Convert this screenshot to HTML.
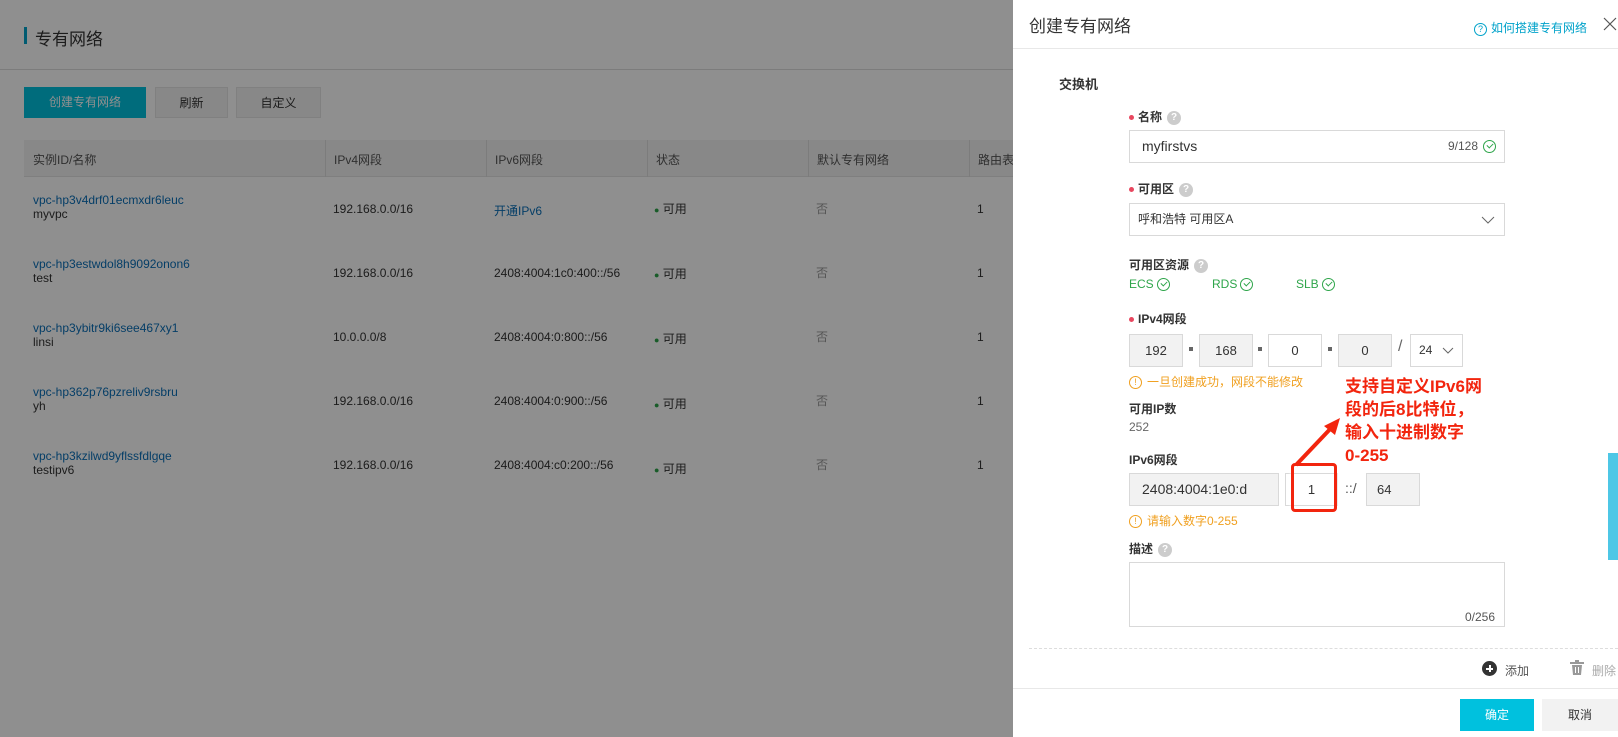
<!DOCTYPE html><html><head><meta charset="utf-8"><style>
*{margin:0;padding:0;box-sizing:border-box}
body{width:1618px;height:737px;overflow:hidden;position:relative;font-family:"Liberation Sans","Noto Sans CJK SC",sans-serif;font-size:12px;color:#333;background:#fff}
.a{position:absolute}
.ov{position:absolute;left:0;top:0;width:1013px;height:737px;background:rgba(0,0,0,0.44)}
.th{color:#555}
.lk{color:#0a6fb8}
.lbl{font-weight:bold;font-size:12px;color:#333}
.dot{display:inline-block;width:5px;height:5px;border-radius:50%;background:#e8475f;margin-right:4px;vertical-align:middle}
.q{display:inline-block;width:14px;height:14px;border-radius:50%;background:#ccc;color:#fff;font-size:10px;text-align:center;line-height:14px;margin-left:5px;vertical-align:middle}
.box{position:absolute;border:1px solid #d9d9d9;height:33px;line-height:31px;font-size:13px;text-align:center}
.g{background:#f2f2f2}
.ck{display:inline-block;width:13px;height:13px;border:1px solid #2ea54a;border-radius:50%;vertical-align:middle;margin-left:3px;position:relative}
.ck:after{content:"";position:absolute;left:3px;top:2px;width:5px;height:3px;border-left:1px solid #2ea54a;border-bottom:1px solid #2ea54a;transform:rotate(-45deg)}
.ann{color:#f2250e;font-weight:bold;font-size:17px;line-height:23px;text-shadow:-1px -1px 0 #fff,1px -1px 0 #fff,-1px 1px 0 #fff,1px 1px 0 #fff,0 0 3px #fff}
.warn{color:#f0a020;font-size:12px}
.wi{display:inline-block;width:13px;height:13px;border:1px solid #f0a020;border-radius:50%;font-size:9px;text-align:center;line-height:11px;margin-right:5px;vertical-align:middle}
</style></head><body>
<div class="a" style="left:0;top:0;width:1013px;height:70px;background:#fff;border-bottom:1px solid #ddd"></div>
<div class="a" style="left:24px;top:27px;width:3px;height:17px;background:#00a2ca"></div>
<div class="a" style="left:35px;top:25px;font-size:17px;color:#333">专有网络</div>
<div class="a" style="left:0;top:71px;width:1013px;height:666px;background:#fff"></div>
<div class="a" style="left:24px;top:87px;width:122px;height:31px;background:#00c1de;color:#fff;text-align:center;line-height:31px">创建专有网络</div>
<div class="a" style="left:155px;top:87px;width:73px;height:31px;background:#f2f2f2;text-align:center;line-height:31px;border:1px solid #e5e5e5">刷新</div>
<div class="a" style="left:236px;top:87px;width:85px;height:31px;background:#f2f2f2;text-align:center;line-height:31px;border:1px solid #e5e5e5">自定义</div>
<div class="a" style="left:24px;top:140px;width:989px;height:37px;background:#f2f2f2;border-bottom:1px solid #e3e3e3"></div>
<div class="a th" style="left:33px;top:151px">实例ID/名称</div>
<div class="a th" style="left:325px;top:140px;border-left:1px solid #ddd;height:37px;padding:11px 0 0 8px">IPv4网段</div>
<div class="a th" style="left:486px;top:140px;border-left:1px solid #ddd;height:37px;padding:11px 0 0 8px">IPv6网段</div>
<div class="a th" style="left:647px;top:140px;border-left:1px solid #ddd;height:37px;padding:11px 0 0 8px">状态</div>
<div class="a th" style="left:808px;top:140px;border-left:1px solid #ddd;height:37px;padding:11px 0 0 8px">默认专有网络</div>
<div class="a th" style="left:969px;top:140px;border-left:1px solid #ddd;height:37px;padding:11px 0 0 8px">路由表</div>
<div class="a" style="left:24px;top:177px;width:989px;height:320px;font-size:12px">
 <div class="a" style="left:9px;top:16px"><div class="lk">vpc-hp3v4drf01ecmxdr6leuc</div><div>myvpc</div></div>
 <div class="a" style="left:309px;top:25px">192.168.0.0/16</div><div class="a lk" style="left:470px;top:25px">开通IPv6</div>
 <div class="a" style="left:9px;top:80px"><div class="lk">vpc-hp3estwdol8h9092onon6</div><div>test</div></div>
 <div class="a" style="left:309px;top:89px">192.168.0.0/16</div><div class="a" style="left:470px;top:89px">2408:4004:1c0:400::/56</div>
 <div class="a" style="left:9px;top:144px"><div class="lk">vpc-hp3ybitr9ki6see467xy1</div><div>linsi</div></div>
 <div class="a" style="left:309px;top:153px">10.0.0.0/8</div><div class="a" style="left:470px;top:153px">2408:4004:0:800::/56</div>
 <div class="a" style="left:9px;top:208px"><div class="lk">vpc-hp362p76pzreliv9rsbru</div><div>yh</div></div>
 <div class="a" style="left:309px;top:217px">192.168.0.0/16</div><div class="a" style="left:470px;top:217px">2408:4004:0:900::/56</div>
 <div class="a" style="left:9px;top:272px"><div class="lk">vpc-hp3kzilwd9yflssfdlgqe</div><div>testipv6</div></div>
 <div class="a" style="left:309px;top:281px">192.168.0.0/16</div><div class="a" style="left:470px;top:281px">2408:4004:c0:200::/56</div>
</div>
<div class="a" style="left:654px;top:177px;line-height:64px"><div><span style="color:#2ea54a;font-size:9px">●</span> 可用</div><div><span style="color:#2ea54a;font-size:9px">●</span> 可用</div><div><span style="color:#2ea54a;font-size:9px">●</span> 可用</div><div><span style="color:#2ea54a;font-size:9px">●</span> 可用</div><div><span style="color:#2ea54a;font-size:9px">●</span> 可用</div></div>
<div class="a" style="left:816px;top:177px;line-height:64px;color:#999"><div>否</div><div>否</div><div>否</div><div>否</div><div>否</div></div>
<div class="a" style="left:977px;top:177px;line-height:64px"><div>1</div><div>1</div><div>1</div><div>1</div><div>1</div></div>
<div class="ov"></div>
<div class="a" style="left:1013px;top:0;width:605px;height:737px;background:#fff"></div>
<div class="a" style="left:1029px;top:12px;font-size:17px;color:#333">创建专有网络</div>
<div class="a" style="left:1474px;top:19px;color:#00a2ca;font-size:12px"><span style="display:inline-block;width:13px;height:13px;border:1px solid #00a2ca;border-radius:50%;font-size:9px;text-align:center;line-height:11px;margin-right:4px">?</span>如何搭建专有网络</div>
<svg class="a" style="left:1603px;top:17px" width="14" height="14"><path d="M1 1L13 13M13 1L1 13" stroke="#555" stroke-width="1.2"/></svg>
<div class="a" style="left:1013px;top:48px;width:605px;height:1px;background:#e8e8e8"></div>
<div class="a lbl" style="left:1059px;top:74px;font-size:13px">交换机</div>
<div class="a lbl" style="left:1129px;top:108px"><span class="dot"></span>名称<span class="q">?</span></div>
<div class="box" style="left:1129px;top:130px;width:376px;text-align:left;padding-left:12px;font-size:14px">myfirstvs<span style="position:absolute;right:8px;font-size:12px;color:#555">9/128<span class="ck" style="margin-left:5px"></span></span></div>
<div class="a lbl" style="left:1129px;top:180px"><span class="dot"></span>可用区<span class="q">?</span></div>
<div class="box" style="left:1129px;top:203px;width:376px;text-align:left;padding-left:8px;font-size:12px">呼和浩特 可用区A<svg style="position:absolute;right:9px;top:12px" width="14" height="8"><path d="M1 1L7 7L13 1" fill="none" stroke="#666"/></svg></div>
<div class="a lbl" style="left:1129px;top:256px">可用区资源<span class="q">?</span></div>
<div class="a" style="left:1129px;top:277px;color:#2ea54a">ECS<span class="ck"></span></div>
<div class="a" style="left:1212px;top:277px;color:#2ea54a">RDS<span class="ck"></span></div>
<div class="a" style="left:1296px;top:277px;color:#2ea54a">SLB<span class="ck"></span></div>
<div class="a lbl" style="left:1129px;top:310px"><span class="dot"></span>IPv4网段</div>
<div class="box g" style="left:1129px;top:334px;width:54px">192</div>
<div class="a" style="left:1189px;top:347px;width:4px;height:4px;background:#666"></div>
<div class="box g" style="left:1199px;top:334px;width:54px">168</div>
<div class="a" style="left:1258px;top:347px;width:4px;height:4px;background:#666"></div>
<div class="box" style="left:1268px;top:334px;width:54px">0</div>
<div class="a" style="left:1328px;top:347px;width:4px;height:4px;background:#666"></div>
<div class="box g" style="left:1338px;top:334px;width:54px">0</div>
<div class="a" style="left:1398px;top:338px;font-size:16px;color:#666">/</div>
<div class="box" style="left:1410px;top:334px;width:53px;text-align:left;padding-left:8px;font-size:12px">24<svg style="position:absolute;right:8px;top:12px" width="12" height="7"><path d="M1 1L6 6L11 1" fill="none" stroke="#666"/></svg></div>
<div class="a warn" style="left:1129px;top:373px"><span class="wi">!</span>一旦创建成功，网段不能修改</div>
<div class="a lbl" style="left:1129px;top:400px">可用IP数</div>
<div class="a" style="left:1129px;top:420px;color:#666">252</div>
<div class="a lbl" style="left:1129px;top:451px">IPv6网段</div>
<div class="box g" style="left:1129px;top:473px;width:150px;text-align:left;padding-left:12px;font-size:14px">2408:4004:1e0:d</div>
<div class="box" style="left:1285px;top:473px;width:53px">1</div>
<div class="a" style="left:1291px;top:463px;width:46px;height:49px;border:3px solid #f2250e;border-radius:4px;box-shadow:0 0 3px #fff"></div>
<div class="a" style="left:1345px;top:480px;font-size:14px;color:#555">::/</div>
<div class="box g" style="left:1366px;top:473px;width:54px;text-align:left;padding-left:10px">64</div>
<div class="a warn" style="left:1129px;top:512px"><span class="wi">!</span>请输入数字0-255</div>
<div class="a lbl" style="left:1129px;top:540px">描述<span class="q">?</span></div>
<div class="a" style="left:1129px;top:562px;width:376px;height:65px;border:1px solid #d9d9d9"></div>
<div class="a" style="left:1465px;top:610px;color:#555">0/256</div>
<svg class="a" style="left:1290px;top:415px" width="60" height="55"><line x1="6" y1="50" x2="44" y2="10" stroke="#f2250e" stroke-width="4"/><polygon points="50,3 34,11 45,20" fill="#f2250e"/></svg>
<div class="a ann" style="left:1345px;top:375px">支持自定义IPv6网<br>段的后8比特位，<br>输入十进制数字<br>0-255</div>
<div class="a" style="left:1029px;top:648px;width:589px;border-top:1px dashed #ddd"></div>
<div class="a" style="left:1482px;top:661px;width:15px;height:15px;border-radius:50%;background:#333"></div>
<div class="a" style="left:1486px;top:668px;width:7px;height:1.5px;background:#fff"></div>
<div class="a" style="left:1489px;top:665px;width:1.5px;height:7px;background:#fff"></div>
<div class="a" style="left:1505px;top:662px;color:#555">添加</div>
<svg class="a" style="left:1570px;top:660px" width="14" height="16"><rect x="0" y="2" width="14" height="2" fill="#999"/><rect x="5" y="0" width="4" height="2" fill="#999"/><path d="M2 5H12L11 15H3Z" fill="#999"/><path d="M5.5 7V13M8.5 7V13" stroke="#fff" stroke-width="1"/></svg>
<div class="a" style="left:1592px;top:662px;color:#aaa">删除</div>
<div class="a" style="left:1013px;top:688px;width:605px;height:1px;background:#e8e8e8"></div>
<div class="a" style="left:1460px;top:699px;width:74px;height:32px;background:#00c1de;color:#fff;text-align:center;line-height:32px">确定</div>
<div class="a" style="left:1542px;top:699px;width:76px;height:32px;background:#f2f2f2;color:#333;text-align:center;line-height:32px">取消</div>
<div class="a" style="left:1608px;top:453px;width:10px;height:107px;background:#4dc7e6"></div>
</body></html>
